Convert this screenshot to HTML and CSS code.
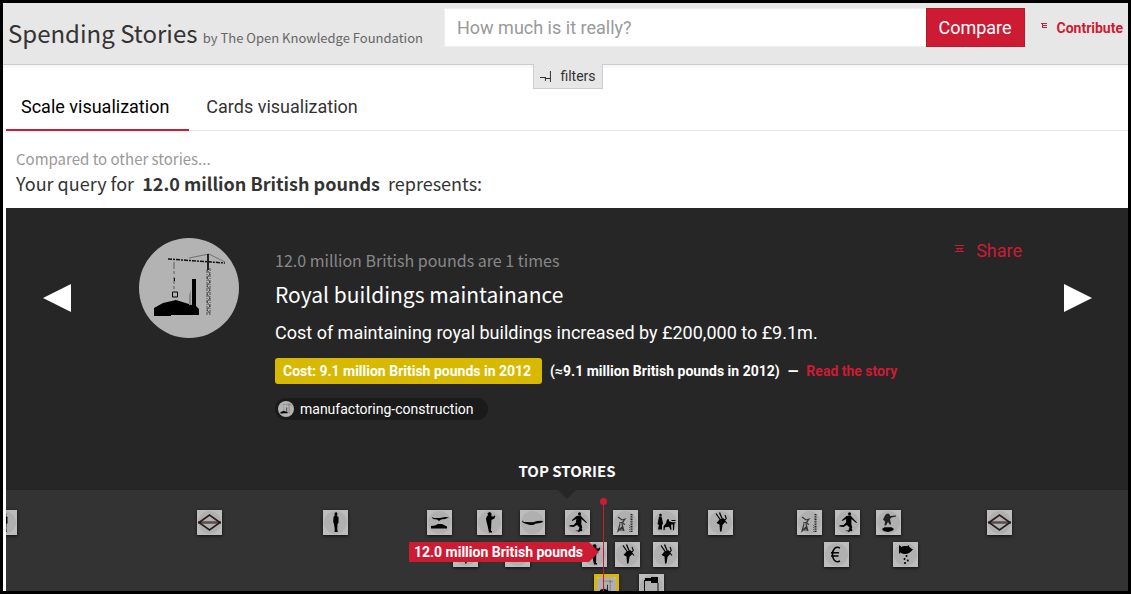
FILE: index.html
```html
<!DOCTYPE html>
<html lang="en">
<head>
<meta charset="utf-8">
<title>Spending Stories</title>
<link rel="stylesheet" href="styles.css">
</head>
<body>
<svg class="sprite" aria-hidden="true">
  <symbol id="crane" viewBox="0 0 100 100">
    <path d="M15 78V70L24 65 37 62 53 67V41h4v27l3 3v6H32v1H15z"/>
    <path d="M50 67V57l2-5v15z" fill="#888"/>
    <path d="M29 21l57 4" fill="none" stroke="#111" stroke-width="1.500" stroke-dasharray="4 1 2 1"/>
    <path d="M50 20l20-4 16 8" fill="none" stroke="#555" stroke-width=".7"/>
    <path d="M69 16v16" fill="none" stroke="#111" stroke-width="1.800"/>
    <path d="M68 32v46M71 30v48" fill="none" stroke="#333" stroke-width=".8" stroke-dasharray="3 1 1 1"/>
    <path d="M68 32l3 4-3 4 3 4-3 4 3 4-3 4 3 4-3 4 3 4-3 4 3 4" fill="none" stroke="#333" stroke-width=".8"/>
    <path d="M35 24v28" fill="none" stroke="#444" stroke-width=".8" stroke-dasharray="7 2 3 3"/>
    <path d="M35.500 40v3M33.500 54h5v5h-5z" fill="none" stroke="#000"/>
  </symbol>
  <symbol id="tube" viewBox="0 0 25 25">
    <path d="M2 12.500L12.500 5 23 12.500 12.500 20z" fill="none" stroke="#2a1c1a" stroke-width="1.600"/>
    <path d="M1 12.500h23" stroke="#2a1c1a" stroke-width="2"/>
    <path d="M4 12.500h17" stroke="#8a7f7c" stroke-width=".5"/>
  </symbol>
  <symbol id="person" viewBox="0 0 25 25">
    <path d="M11.500 3l2-1 1 2-.5 2 1.500 1v6l-1 1-.2 5 .5 3h-3.300l.3-3-.8-5-.8-2 .3-5 1.200-1.500z"/>
  </symbol>
  <symbol id="worker" viewBox="0 0 25 25">
    <path d="M10.500 3l2.500-1 1.500 1.500v3l2.500-.3.500-1.200.8 1.500-1 2-2.800 1.500-.3 5-.2 6h1v1.500h-3l-1.500-7-1-4-.5-3 1-2.500 1-.5z"/>
  </symbol>
  <symbol id="plane" viewBox="0 0 25 25">
    <path d="M2 10.500l2 1.500 9 .3 4-1.300 5-.3 1.300 1-2 1-6 1-2 1.300H10l-5-1.500-2.500-1.200z"/>
  </symbol>
  <symbol id="planecar" viewBox="0 0 25 25">
    <path d="M5 7l2 1h6l5-1 4 .5-4 1.500-4 .5-2 1.500-2-1.500-4-.5z"/>
    <path d="M4 16l4-.6 3-1.400h4l3 1.500 2 1v2H4z"/>
  </symbol>
  <symbol id="footballer" viewBox="0 0 25 25">
    <circle cx="14.500" cy="3.800" r="1.500"/>
    <path d="M11.500 6l4-.8 1.500 2 5 5.300-.8.5-4.700-4-.2 5 1 3.500-2.500 4h-1.800l1.500-4-2.500-2.500-3.500 2-4-.5v-1.300l4-.2 2.500-2.500.2-3.500-4 2-.5-.7z"/>
    <circle cx="16" cy="20" r="1.300"/><path d="M10 20.500h4.500v1.500z"/>
  </symbol>
  <symbol id="dancer" viewBox="0 0 25 25">
    <path d="M8 3.500l4.500 6.500M11.500 2.500l2.500 6" fill="none" stroke="#000" stroke-width="1.300"/>
    <path d="M17 5l1.300 3.500-1.800 2 2.500 3" fill="none" stroke="#000" stroke-width="1.100"/>
    <path d="M11.500 9.500l3.500-1.500 2 1.500.2 2.500-2.700 3-1 6.500h-1.500l-.5-7-3-1.500z"/>
  </symbol>
  <symbol id="office" viewBox="0 0 25 25">
    <circle cx="7.500" cy="5" r="1.300"/>
    <path d="M6 6.500h2.500l1 4.500.5 3-1 1v4.500H5l.8-4.500-1.300-1z"/>
    <path d="M14 9.500l2-.3v2l3 1h3.500v1h-1l-.5 7h-1l-.2-6-1.800.5.500 5h-1l-1.500-3-4 .5-.5 3h-1v-4l2.500-3z"/>
    <path d="M18.500 10.500h4" stroke="#000"/>
  </symbol>
  <symbol id="pylons" viewBox="0 0 25 25">
    <path d="M5 7l4 3 3-1-3 4 3 1.500M6 13l5-1M7 14l-2 7 4-4 2 4-2-7M5 20h6" fill="none" stroke="#333" stroke-width="1.100"/>
    <path d="M18.500 4v18" stroke="#222" stroke-width="2" stroke-dasharray="1 .7"/>
    <path d="M16.500 15v7" stroke="#666" stroke-dasharray="1 1"/>
  </symbol>
  <symbol id="soldier" viewBox="0 0 25 25">
    <path d="M10 4l2.500-.5L14 5v1l6-.5v1l-4.500 1L14 9l1 5-1 1-2-3-2 3.500H8.500l.5-4-2-2 1.500-3z" fill="#222"/>
    <path d="M6 19l2.500-1.800h7L18 19l-1.500 1.800L12 22l-4.500-1z"/>
  </symbol>
  <symbol id="euro" viewBox="0 0 25 25">
    <path d="M16 6c-4.500-2.300-7.500 1.500-7.500 6.500s3 8.800 7.500 6.500M7 10.800h8M7 14h7.500" fill="none" stroke="#000" stroke-width="1.600"/>
  </symbol>
  <symbol id="piggy" viewBox="0 0 25 25">
    <ellipse cx="12" cy="8" rx="6" ry="4"/>
    <path d="M6 3l2 1.500L7 12l-1-1zM14 4.500L15.500 3l1 2.500L20 7.500 18.500 9l-3 2z"/>
    <circle cx="13.500" cy="14" r="1"/><circle cx="11.500" cy="17" r="1"/><circle cx="14.800" cy="18.500" r="1"/><circle cx="12" cy="21" r="1.100"/>
  </symbol>
  <symbol id="stamp" viewBox="0 0 25 25">
    <path d="M6 4h6V3h7v6h-7V7H6z"/>
    <path d="M5.500 6v19M19 9v16" fill="none" stroke="#111"/>
  </symbol>
</svg>

<header class="topbar">
  <h1 class="brand">Spending Stories <small>by The Open Knowledge Foundation</small></h1>
  <form class="search">
    <input type="text" aria-label="Amount" placeholder="How much is it really?">
    <button type="button">Compare</button>
  </form>
  <a class="contribute" href="#">
    <svg width="6" height="5" viewBox="0 0 6 5"><path d="M0 .5h6M1 2.500h5M1 4.500h5M1.500 0v5" fill="none" stroke="currentColor"/></svg>
    Contribute
  </a>
  <button class="filters" type="button">
    <svg width="12" height="11" viewBox="0 0 12 11"><path d="M0 6.500h6M5 7.500h6M10.500 0v11M5.500 6v4" fill="none" stroke="currentColor"/></svg>
    filters
  </button>
</header>

<main class="content">
  <nav class="tabs">
    <a class="tab active" href="#">Scale visualization</a>
    <a class="tab" href="#">Cards visualization</a>
  </nav>

  <section class="query">
    <p class="hint">Compared to other stories...</p>
    <p class="sentence">Your query for <strong>12.0 million British pounds</strong> represents:</p>
  </section>

  <section class="panel">
    <div class="row">
      <button class="step" type="button" aria-label="Previous"><svg width="28" height="28" viewBox="0 0 28 28"><path d="M28 0v28L0 14z"/></svg></button>
      <article class="story">
        <svg class="portrait" width="100" height="100"><use href="#crane"/></svg>
        <div class="text">
          <p class="ratio">12.0 million British pounds are 1 times</p>
          <h2 class="title">Royal buildings maintainance</h2>
          <p class="summary">Cost of maintaining royal buildings increased by £200,000 to £9.1m.</p>
          <p class="cost"><span class="badge">Cost: 9.1 million British pounds in 2012</span><span>(≈9.1 million British pounds in 2012)</span><span>—</span><a href="#">Read the story</a></p>
          <a class="tag" href="#"><svg width="16" height="16"><use href="#crane"/></svg>manufactoring-construction</a>
        </div>
        <a class="share" href="#">
          <svg width="9" height="7" viewBox="0 0 9 7"><path d="M0 .5h9M1 3.500h7M0 6.500h9M3 3v4M6 3v4" fill="none" stroke="currentColor"/></svg>
          Share
        </a>
      </article>
      <button class="step" type="button" aria-label="Next"><svg width="28" height="28" viewBox="0 0 28 28"><path d="M0 0v28L28 14z"/></svg></button>
    </div>
    <h3 class="caption">TOP STORIES</h3>
  </section>

  <section class="timeline">
    <svg class="pin r1" style="left:-14px"><use href="#person"/></svg>
    <svg class="pin r1" style="left:191px"><use href="#tube"/></svg>
    <svg class="pin r1" style="left:317px"><use href="#person"/></svg>
    <svg class="pin r1" style="left:421px"><use href="#planecar"/></svg>
    <svg class="pin r1" style="left:471px"><use href="#worker"/></svg>
    <svg class="pin r1" style="left:514px"><use href="#plane"/></svg>
    <svg class="pin r1" style="left:559px"><use href="#footballer"/></svg>
    <svg class="pin r1" style="left:607px"><use href="#pylons"/></svg>
    <svg class="pin r1" style="left:647px"><use href="#office"/></svg>
    <svg class="pin r1" style="left:702px"><use href="#dancer"/></svg>
    <svg class="pin r1" style="left:791px"><use href="#pylons"/></svg>
    <svg class="pin r1" style="left:829px"><use href="#footballer"/></svg>
    <svg class="pin r1" style="left:870px"><use href="#soldier"/></svg>
    <svg class="pin r1" style="left:981px"><use href="#tube"/></svg>
    <svg class="pin r2" style="left:447px"><use href="#dancer"/></svg>
    <svg class="pin r2" style="left:499px"><use href="#plane"/></svg>
    <svg class="pin r2" style="left:576px"><use href="#worker"/></svg>
    <svg class="pin r2" style="left:609px"><use href="#dancer"/></svg>
    <svg class="pin r2" style="left:647px"><use href="#dancer"/></svg>
    <svg class="pin r2" style="left:818px"><use href="#euro"/></svg>
    <svg class="pin r2" style="left:887px"><use href="#piggy"/></svg>
    <svg class="pin r3 selected" style="left:588px"><use href="#crane"/></svg>
    <svg class="pin r3" style="left:633px"><use href="#stamp"/></svg>
    <div class="marker" style="left:597px"><span class="label">12.0 million British pounds</span></div>
  </section>
</main>
</body>
</html>
```

FILE: styles.css
```css
* { box-sizing: border-box; }

body {
  display: flex;
  flex-direction: column;
  height: 100vh;
  margin: 0;
  border: 3px solid #000;
  overflow: hidden;
  background: #fff;
  color: #333;
  font: 14px/20px Roboto, sans-serif;
}

h1, h2, h3, p { margin: 0; font-weight: 400; }
a { color: #cd1b33; text-decoration: none; }
button { font-family: inherit; cursor: pointer; }
.sprite { position: absolute; width: 0; height: 0; }

.brand, .query, .ratio, .title, .caption {
  font-family: "Noto Sans CJK SC", sans-serif;
}

.topbar {
  position: relative;
  z-index: 1;
  display: flex;
  align-items: flex-start;
  height: 62px;
  flex: none;
  padding: 5px 5px 0;
  background: #e7e7e7;
  border-bottom: 1px solid #ccc;
  box-shadow: 0 3px 0 #f8f8f8;
}
.brand { font-size: 24px; line-height: 50px; white-space: nowrap; }
.brand small { color: #666; font-size: 13px; }
.search { display: flex; flex: 1; margin: 0 16px 0 21px; }
.search input {
  flex: 1;
  min-width: 0;
  height: 39px;
  padding: 0 12px;
  border: 1px solid #eee;
  border-right: 0;
  font: 18px Roboto, sans-serif;
}
.search input::placeholder { color: #999; }
.search button {
  width: 99px;
  height: 39px;
  padding: 0;
  border: 1px solid #b7182d;
  background: #cd1b33;
  color: #fff;
  font-size: 18px;
}
.contribute { display: flex; gap: 10px; font-weight: 700; line-height: 40px; }
.contribute svg { margin-top: 15px; }
.filters {
  position: absolute;
  top: 61px;
  left: calc(50% + 2px);
  transform: translateX(-50%);
  display: flex;
  align-items: center;
  gap: 9px;
  height: 25px;
  padding: 0 6px;
  border: 1px solid #ccc;
  border-top: 0;
  background: #e7e7e7;
  color: #333;
  font-size: 14px;
}

.content { display: flex; flex-direction: column; flex: 1; min-height: 0; padding-left: 3px; }

.tabs { display: flex; gap: 2px; margin-top: 18px; border-bottom: 1px solid #e7e7e7; }
.tab {
  margin-bottom: -1px;
  padding: 11px 20px 9px 15px;
  border-bottom: 2px solid transparent;
  color: #333;
  font-size: 18px;
  line-height: 26px;
}
.tab.active { border-color: #cd1b33; color: #000; }

.query { padding: 17px 10px 11px; }
.hint { color: #999; font-size: 15px; line-height: 22px; }
.sentence { font-size: 18px; line-height: 27px; }
.sentence strong { margin: 0 4px; }

.panel { background: #262626; color: #fff; }
.row { display: flex; align-items: flex-start; justify-content: space-between; gap: 42px; padding: 30px 36px 0 37px; }
.step { margin-top: 46px; padding: 0; border: 0; background: none; }
.step svg { display: block; fill: #fff; }
.story { display: flex; flex: 1; margin-left: 26px; }
.portrait { flex: none; border-radius: 50%; background: #b3b3b3; }
.text { flex: 1; padding: 10px 0 0 36px; }
.ratio { color: #888; font-size: 16px; line-height: 24px; }
.title { margin-top: 6px; font-size: 21px; line-height: 32px; }
.summary { margin-top: 9px; font-size: 18px; line-height: 28px; }
.cost { display: flex; gap: 8px; margin-top: 11px; font-weight: 700; line-height: 26px; white-space: nowrap; }
.badge { padding: 0 11px 0 8px; border-radius: 3px; background: #d8b900; }
.tag {
  display: inline-flex;
  align-items: center;
  gap: 6px;
  margin-top: 14px;
  padding: 0 14px 0 3px;
  border-radius: 11px;
  background: #1a1a1a;
  color: #fff;
  line-height: 22px;
}
.tag svg { border-radius: 50%; background: #b3b3b3; }
.share { display: flex; gap: 12px; font-size: 18px; line-height: 26px; }
.share svg { margin-top: 7px; }
.caption { position: relative; padding: 37px 0 7px; font-size: 15px; font-weight: 700; line-height: 24px; text-align: center; }
.caption::after {
  content: "";
  position: absolute;
  z-index: 1;
  top: 100%;
  left: 50%;
  margin-left: -9px;
  border: 9px solid transparent;
  border-top-color: #262626;
  border-bottom: 0;
}

.timeline { position: relative; flex: 1; min-height: 0; overflow: hidden; background: #333; }
.pin {
  position: absolute;
  width: 25px;
  height: 25px;
  background: radial-gradient(circle, #b0b0b0 11px, #bdbdbd 12px);
  box-shadow: 0 1px 3px #111;
}
.r1 { top: 20px; }
.r2 { top: 52px; }
.r3 { top: 84px; }
.selected { border: 3px solid #d8b900; }
.marker { position: absolute; top: 12px; bottom: 0; width: 1px; background: #cd1b33; }
.marker::before {
  content: "";
  position: absolute;
  top: -4px;
  left: -3px;
  width: 7px;
  height: 7px;
  border-radius: 50%;
  background: #cd1b33;
}
.label {
  position: absolute;
  top: 40px;
  right: 5px;
  padding: 0 16px 0 5px;
  background: #cd1b33;
  clip-path: polygon(0 0, calc(100% - 10px) 0, 100% 50%, calc(100% - 10px) 100%, 0 100%);
  color: #fff;
  font-weight: 700;
  white-space: nowrap;
}
```
